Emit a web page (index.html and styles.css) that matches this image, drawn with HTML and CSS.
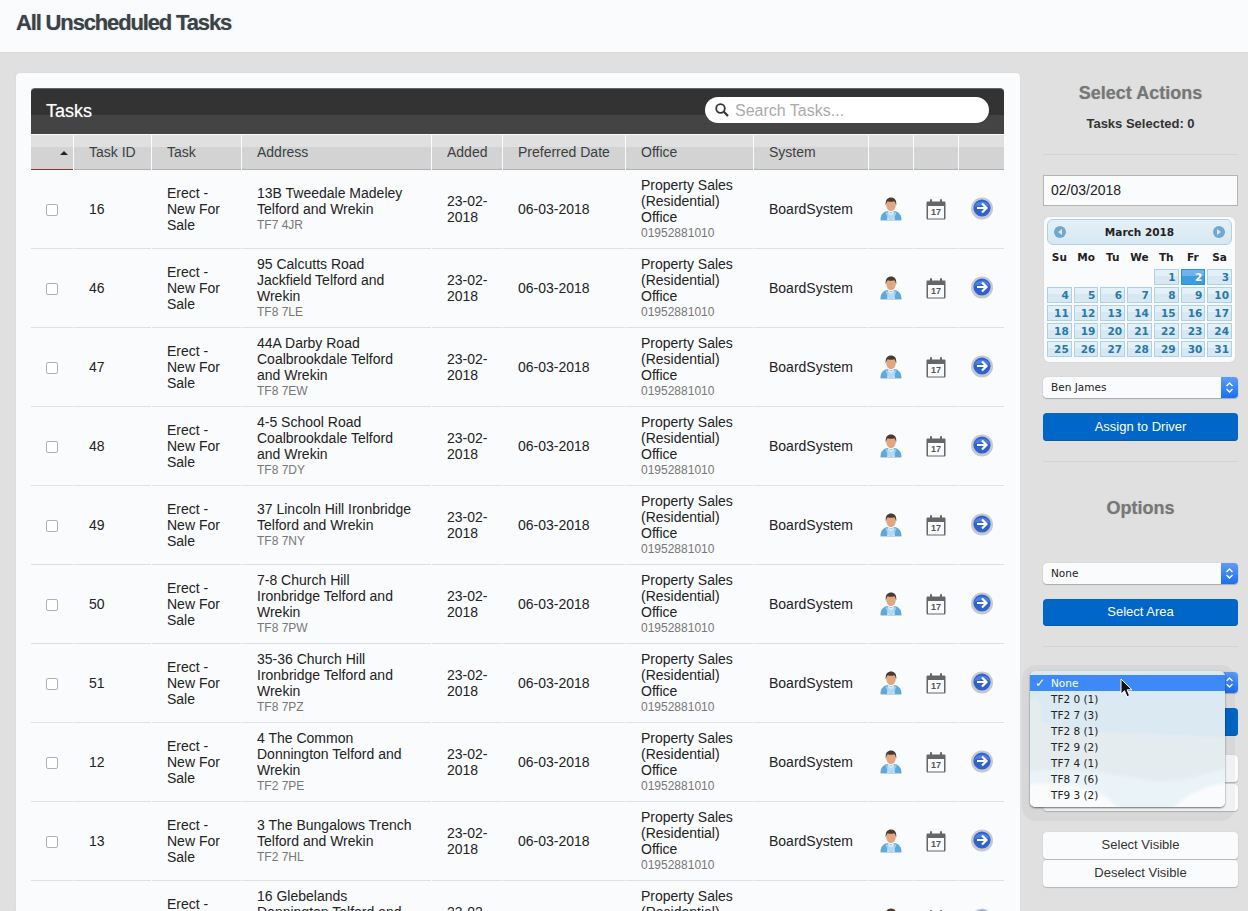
FILE: index.html
```html
<!DOCTYPE html>
<html lang="en">
<head>
<meta charset="utf-8">
<title>All Unscheduled Tasks</title>
<link rel="stylesheet" href="styles.css">
</head>
<body>
<svg class="defs" width="0" height="0" aria-hidden="true">
  <symbol id="i-person" viewBox="0 0 22 24">
    <path d="M.5 23c0-5 2-7.500 6.500-9l4 1.500 4-1.500c4.500 1.500 6.500 4 6.500 9z" fill="#5ea8dc"/>
    <path d="M8 14.500l3 1.500 3-1.500 .8 8.500H7.200z" fill="#d6ecf8"/>
    <path d="M6.500 14.500l4.500 4 4.500-4 1 1.500-3.500 7h-4L5.500 16z" fill="#a9d5f0" opacity=".8"/>
    <ellipse cx="11" cy="8" rx="4.800" ry="6.200" fill="#e0a781"/>
    <path d="M5.800 8.500C5 2.500 8 .5 11 .5s6 2 5.200 8c-.6-2.300-1.200-3.800-2-4.300-2 .8-4.400 .8-6.400 0-.8.5-1.400 2-2 4.300z" fill="#4b3a30"/>
    <rect x=".5" y="23" width="21" height="1" fill="#c9d2d8"/>
  </symbol>
  <symbol id="i-cal" viewBox="0 0 20 21">
    <path d="M1.500 2.500h17a1 1 0 0 1 1 1v16a1 1 0 0 1-1 1h-17a1 1 0 0 1-1-1v-16a1 1 0 0 1 1-1z" fill="#666"/>
    <rect x="2" y="7" width="16" height="12.500" fill="#fafbfd"/>
    <rect x="4" y="0" width="2" height="4.500" rx="1" fill="#666"/>
    <rect x="14" y="0" width="2" height="4.500" rx="1" fill="#666"/>
  </symbol>
  <symbol id="i-go" viewBox="0 0 22 23">
    <circle cx="11" cy="11.500" r="11" fill="#c5c8cf"/>
    <circle cx="11" cy="11" r="8.600" fill="#2f62cf"/>
    <path d="M3 10a8.500 8 0 0 1 16 0c-5-2-11-2-16 0z" fill="#5f8be6" opacity=".7"/>
    <path d="M6 11h9M11 6.500l4.500 4.500-4.500 4.500" fill="none" stroke="#fff" stroke-width="2.200"/>
  </symbol>
</svg>

<header class="page-header">
  <h1 class="page-title">All Unscheduled Tasks</h1>
</header>

<div class="layout">
  <main class="card">
    <div class="bar">
      <span class="bar-title">Tasks</span>
      <div class="search">
        <svg class="search-icon" width="14" height="14" viewBox="0 0 14 14" aria-hidden="true"><circle cx="5.500" cy="5.500" r="4.300" fill="none" stroke="#333" stroke-width="1.800"/><path d="M8.800 8.800L13 13" stroke="#333" stroke-width="2.200"/></svg>
        <span class="search-text">Search Tasks...</span>
      </div>
    </div>
    <div class="table-wrap">
    <table class="tasks">
      <colgroup>
        <col class="c1"><col class="c2"><col class="c3"><col class="c4"><col class="c5"><col class="c6"><col class="c7"><col class="c8"><col class="c9"><col class="c9"><col class="c11">
      </colgroup>
      <thead>
        <tr>
          <th class="sorted"><span class="sort-arrow"></span></th>
          <th>Task ID</th><th>Task</th><th>Address</th><th>Added</th><th>Preferred Date</th><th>Office</th><th>System</th><th></th><th></th><th></th>
        </tr>
      </thead>
      <tbody>
        <tr><td><span class="check"></span></td><td>16</td><td>Erect - New For Sale</td><td>13B Tweedale Madeley Telford and Wrekin<small>TF7 4JR</small></td><td>23-02-2018</td><td>06-03-2018</td><td>Property Sales (Residential) Office<small>01952881010</small></td><td>BoardSystem</td><td class="ic"><svg class="i-person"><use href="#i-person"/></svg></td><td class="ic"><span class="cal-ico"><svg class="i-cal"><use href="#i-cal"/></svg><span class="cal-day">17</span></span></td><td class="ic"><svg class="i-go"><use href="#i-go"/></svg></td></tr>
        <tr><td><span class="check"></span></td><td>46</td><td>Erect - New For Sale</td><td>95 Calcutts Road Jackfield Telford and Wrekin<small>TF8 7LE</small></td><td>23-02-2018</td><td>06-03-2018</td><td>Property Sales (Residential) Office<small>01952881010</small></td><td>BoardSystem</td><td class="ic"><svg class="i-person"><use href="#i-person"/></svg></td><td class="ic"><span class="cal-ico"><svg class="i-cal"><use href="#i-cal"/></svg><span class="cal-day">17</span></span></td><td class="ic"><svg class="i-go"><use href="#i-go"/></svg></td></tr>
        <tr><td><span class="check"></span></td><td>47</td><td>Erect - New For Sale</td><td>44A Darby Road Coalbrookdale Telford and Wrekin<small>TF8 7EW</small></td><td>23-02-2018</td><td>06-03-2018</td><td>Property Sales (Residential) Office<small>01952881010</small></td><td>BoardSystem</td><td class="ic"><svg class="i-person"><use href="#i-person"/></svg></td><td class="ic"><span class="cal-ico"><svg class="i-cal"><use href="#i-cal"/></svg><span class="cal-day">17</span></span></td><td class="ic"><svg class="i-go"><use href="#i-go"/></svg></td></tr>
        <tr><td><span class="check"></span></td><td>48</td><td>Erect - New For Sale</td><td>4-5 School Road Coalbrookdale Telford and Wrekin<small>TF8 7DY</small></td><td>23-02-2018</td><td>06-03-2018</td><td>Property Sales (Residential) Office<small>01952881010</small></td><td>BoardSystem</td><td class="ic"><svg class="i-person"><use href="#i-person"/></svg></td><td class="ic"><span class="cal-ico"><svg class="i-cal"><use href="#i-cal"/></svg><span class="cal-day">17</span></span></td><td class="ic"><svg class="i-go"><use href="#i-go"/></svg></td></tr>
        <tr><td><span class="check"></span></td><td>49</td><td>Erect - New For Sale</td><td>37 Lincoln Hill Ironbridge Telford and Wrekin<small>TF8 7NY</small></td><td>23-02-2018</td><td>06-03-2018</td><td>Property Sales (Residential) Office<small>01952881010</small></td><td>BoardSystem</td><td class="ic"><svg class="i-person"><use href="#i-person"/></svg></td><td class="ic"><span class="cal-ico"><svg class="i-cal"><use href="#i-cal"/></svg><span class="cal-day">17</span></span></td><td class="ic"><svg class="i-go"><use href="#i-go"/></svg></td></tr>
        <tr><td><span class="check"></span></td><td>50</td><td>Erect - New For Sale</td><td>7-8 Church Hill Ironbridge Telford and Wrekin<small>TF8 7PW</small></td><td>23-02-2018</td><td>06-03-2018</td><td>Property Sales (Residential) Office<small>01952881010</small></td><td>BoardSystem</td><td class="ic"><svg class="i-person"><use href="#i-person"/></svg></td><td class="ic"><span class="cal-ico"><svg class="i-cal"><use href="#i-cal"/></svg><span class="cal-day">17</span></span></td><td class="ic"><svg class="i-go"><use href="#i-go"/></svg></td></tr>
        <tr><td><span class="check"></span></td><td>51</td><td>Erect - New For Sale</td><td>35-36 Church Hill Ironbridge Telford and Wrekin<small>TF8 7PZ</small></td><td>23-02-2018</td><td>06-03-2018</td><td>Property Sales (Residential) Office<small>01952881010</small></td><td>BoardSystem</td><td class="ic"><svg class="i-person"><use href="#i-person"/></svg></td><td class="ic"><span class="cal-ico"><svg class="i-cal"><use href="#i-cal"/></svg><span class="cal-day">17</span></span></td><td class="ic"><svg class="i-go"><use href="#i-go"/></svg></td></tr>
        <tr><td><span class="check"></span></td><td>12</td><td>Erect - New For Sale</td><td>4 The Common Donnington Telford and Wrekin<small>TF2 7PE</small></td><td>23-02-2018</td><td>06-03-2018</td><td>Property Sales (Residential) Office<small>01952881010</small></td><td>BoardSystem</td><td class="ic"><svg class="i-person"><use href="#i-person"/></svg></td><td class="ic"><span class="cal-ico"><svg class="i-cal"><use href="#i-cal"/></svg><span class="cal-day">17</span></span></td><td class="ic"><svg class="i-go"><use href="#i-go"/></svg></td></tr>
        <tr><td><span class="check"></span></td><td>13</td><td>Erect - New For Sale</td><td>3 The Bungalows Trench Telford and Wrekin<small>TF2 7HL</small></td><td>23-02-2018</td><td>06-03-2018</td><td>Property Sales (Residential) Office<small>01952881010</small></td><td>BoardSystem</td><td class="ic"><svg class="i-person"><use href="#i-person"/></svg></td><td class="ic"><span class="cal-ico"><svg class="i-cal"><use href="#i-cal"/></svg><span class="cal-day">17</span></span></td><td class="ic"><svg class="i-go"><use href="#i-go"/></svg></td></tr>
        <tr><td><span class="check"></span></td><td></td><td>Erect - New For Sale</td><td>16 Glebelands Donnington Telford and Wrekin<small>&nbsp;</small></td><td>23-02-2018</td><td>06-03-2018</td><td>Property Sales (Residential) Office<small>&nbsp;</small></td><td>BoardSystem</td><td class="ic"><svg class="i-person"><use href="#i-person"/></svg></td><td class="ic"><span class="cal-ico"><svg class="i-cal"><use href="#i-cal"/></svg></span></td><td class="ic"><svg class="i-go"><use href="#i-go"/></svg></td></tr>
      </tbody>
    </table>
    </div>
  </main>

  <aside class="side">
    <h2 class="side-title first">Select Actions</h2>
    <p class="selected-count">Tasks Selected: 0</p>
    <hr class="rule rule-a">

    <div class="date-input">02/03/2018</div>

    <div class="cal">
      <div class="cal-head">
        <span class="cal-nav"><span class="tri tri-l"></span></span>
        <span class="cal-month">March 2018</span>
        <span class="cal-nav"><span class="tri tri-r"></span></span>
      </div>
      <div class="cal-dow"><span>Su</span><span>Mo</span><span>Tu</span><span>We</span><span>Th</span><span>Fr</span><span>Sa</span></div>
      <div class="cal-grid">
        <span class="blank"></span><span class="blank"></span><span class="blank"></span><span class="blank"></span>
        <span>1</span><span class="on">2</span><span>3</span>
        <span>4</span><span>5</span><span>6</span><span>7</span><span>8</span><span>9</span><span>10</span>
        <span>11</span><span>12</span><span>13</span><span>14</span><span>15</span><span>16</span><span>17</span>
        <span>18</span><span>19</span><span>20</span><span>21</span><span>22</span><span>23</span><span>24</span>
        <span>25</span><span>26</span><span>27</span><span>28</span><span>29</span><span>30</span><span>31</span>
      </div>
    </div>

    <div class="select sel-driver"><span class="sel-text">Ben James</span><span class="sel-btn"><svg width="9" height="15" viewBox="0 0 9 15"><path d="M1.500 6l3-3 3 3M1.500 9l3 3 3-3" fill="none" stroke="#fff" stroke-width="1.400"/></svg></span></div>
    <div class="btn-blue btn-assign">Assign to Driver</div>
    <hr class="rule rule-b">

    <h2 class="side-title options">Options</h2>
    <div class="select sel-area"><span class="sel-text">None</span><span class="sel-btn"><svg width="9" height="15" viewBox="0 0 9 15"><path d="M1.500 6l3-3 3 3M1.500 9l3 3 3-3" fill="none" stroke="#fff" stroke-width="1.400"/></svg></span></div>
    <div class="btn-blue btn-area">Select Area</div>
    <hr class="rule rule-c">

    <div class="select sel-post"><span class="sel-text"></span><span class="sel-btn"><svg width="9" height="15" viewBox="0 0 9 15"><path d="M1.500 6l3-3 3 3M1.500 9l3 3 3-3" fill="none" stroke="#fff" stroke-width="1.400"/></svg></span></div>
    <div class="btn-blue btn-post"></div>
    <div class="btn-white btn-under"></div>
    <div class="btn-white"></div>
    <div class="btn-white btn-vis">Select Visible</div>
    <div class="btn-white btn-desel">Deselect Visible</div>
  </aside>
</div>

<div class="menu-halo"></div>
<div class="menu">
  <svg class="menu-bg" width="195" height="136" viewBox="0 0 195 136" preserveAspectRatio="none" aria-hidden="true">
    <rect width="195" height="136" fill="#dbe9f2"/>
    <path d="M0 30C8 34 14 20 14 50 40 66 90 60 195 67V136H0z" fill="#e5ecf0"/>
    <path d="M0 100C30 94 70 100 110 106 150 114 170 100 195 96V136H0z" fill="#e9f3f8"/>
    <path d="M0 112C30 108 60 112 78 124 84 132 90 134 92 136H0z" fill="#fafbfd"/>
    <path d="M140 136C150 124 170 112 195 110V136z" fill="#fafbfd"/>
  </svg>
  <ul class="menu-list">
    <li class="menu-on"><span class="tick">✓</span>None</li>
    <li>TF2 0 (1)</li>
    <li>TF2 7 (3)</li>
    <li>TF2 8 (1)</li>
    <li>TF2 9 (2)</li>
    <li>TF7 4 (1)</li>
    <li>TF8 7 (6)</li>
    <li>TF9 3 (2)</li>
  </ul>
</div>
<svg class="cursor" width="13" height="20" viewBox="0 0 13 20" aria-hidden="true"><path d="M1 1v15l3.500-3.300 2.500 6 2.600-1.100-2.500-5.800H12z" fill="#111" stroke="#fff" stroke-width="1"/></svg>
</body>
</html>
```
FILE: styles.css
```css
* { box-sizing: border-box; }
html, body { margin: 0; height: 911px; overflow: hidden; }
body {
  position: relative;
  background: #e0e0e0;
  font-family: "Liberation Sans", Arial, sans-serif;
  font-size: 14px;
  line-height: 16px;
  color: #222;
}
.defs { position: absolute; }

.page-header {
  height: 53px;
  background: #fafbfd;
  border-bottom: 1px solid #d6d6d6;
  padding: 11px 16px 0;
}
.page-title {
  margin: 0;
  font-size: 22px;
  line-height: 24px;
  font-weight: bold;
  letter-spacing: -1.15px;
  color: #3c4348;
  text-shadow: 0 0 1px rgba(60, 67, 72, .5);
}

.layout { display: flex; padding: 20px 0 0 16px; }
.card {
  flex: none;
  width: 1004px;
  height: 838px;
  padding: 15px 16px 0 15px;
  overflow: hidden;
  background: #fafbfd;
  border-radius: 4px 4px 0 0;
  box-shadow: 0 0 1px rgba(0, 0, 0, .12);
}

.bar {
  height: 46px;
  margin-bottom: 1px;
  display: flex;
  align-items: flex-start;
  justify-content: space-between;
  padding: 8px 15px 0;
  border-radius: 4px 4px 0 0;
  border-top: 1px solid #666;
  background: linear-gradient(#333 0, #333 26px, #444 26px, #444 100%);
}
.bar-title {
  padding-top: 5px;
  font-size: 18px;
  line-height: 18px;
  color: #fff;
  text-shadow: 0 0 1px rgba(255, 255, 255, .5);
}
.search {
  width: 284px;
  height: 26px;
  display: flex;
  align-items: center;
  gap: 6px;
  padding-left: 10px;
  background: #fff;
  border-radius: 13px;
}
.search-icon { flex: none; }
.search-text { padding-top: 1px; font-size: 16px; color: #aaa; }

.table-wrap { margin: 0 -1px; }
.tasks {
  width: 975px;
  table-layout: fixed;
  border-collapse: separate;
  border-spacing: 1px 0;
}
.c1 { width: 42px; }
.c2 { width: 77px; }
.c3 { width: 89px; }
.c4 { width: 189px; }
.c5 { width: 70px; }
.c6 { width: 122px; }
.c7 { width: 127px; }
.c8 { width: 114px; }
.c9 { width: 44px; }
.c11 { width: 45px; }

.tasks th {
  height: 35px;
  padding: 0 15px;
  text-align: left;
  font-weight: normal;
  color: #3a3f44;
  background: linear-gradient(#e0e0e0 0, #e0e0e0 12px, #d3d3d3 12px, #d3d3d3 100%);
  border-bottom: 1px solid #b0b0b0;
  white-space: nowrap;
}
.tasks th.sorted { border-bottom-color: #8a3a28; text-align: right; padding-right: 5px; }
.sort-arrow {
  display: inline-block;
  border: 4px solid transparent;
  border-top: 0;
  border-bottom: 4px solid #222;
  vertical-align: middle;
}
.tasks tbody tr { height: 79px; }
.tasks td {
  padding: 0 15px;
  border-bottom: 1px solid #dfe0e3;
  vertical-align: middle;
}
.tasks td:nth-child(5), .tasks td:nth-child(8) { padding-right: 0; }
.tasks td.ic { padding: 0; }
.tasks td small { display: block; font-size: 12px; color: #777; }
.check {
  display: block;
  width: 12px;
  height: 12px;
  margin-top: 2px;
  background: #fff;
  border: 1px solid #b0b0b0;
  border-radius: 2px;
}
.i-person { width: 22px; height: 24px; display: block; margin-left: 11px; }
.i-cal { width: 20px; height: 21px; display: block; }
.cal-ico { position: relative; display: block; width: 20px; height: 21px; margin-left: 12px; }
.cal-day {
  position: absolute;
  left: 0;
  right: 0;
  top: 8px;
  text-align: center;
  font-size: 9px;
  line-height: 10px;
  font-weight: bold;
  color: #555;
}
.i-go { width: 22px; height: 23px; display: block; margin: 0 0 2px 12px; }

.side { flex: none; width: 195px; margin-left: 23px; }
.side-title {
  margin: 0;
  text-align: center;
  font-size: 18px;
  line-height: 20px;
  font-weight: bold;
  color: #777;
  text-shadow: 0 0 1px rgba(119, 119, 119, .5);
}
.side-title.first { padding-top: 10px; }
.side-title.options { margin-top: 36px; }
.selected-count {
  margin: 13px 0 0;
  text-align: center;
  font-size: 13px;
  font-weight: bold;
  color: #333;
}
.rule { border: 0; border-top: 1px solid #d4d4d4; margin: 0; }
.rule-a { margin-top: 22px; }
.rule-b { margin-top: 20px; }
.rule-c { margin-top: 20px; }

.date-input {
  height: 31px;
  margin-top: 20px;
  padding: 6px 7px;
  background: #fafbfd;
  border: 1px solid #b4b4b4;
  font-size: 14px;
}

.cal {
  width: 191px;
  height: 145px;
  margin: 11px 0 0 1px;
  padding: 2px 3px;
  background: #fafbfd;
  border-radius: 5px;
  box-shadow: 0 0 1px rgba(0, 0, 0, .2);
  font-family: "DejaVu Sans", sans-serif;
  font-size: 10.5px;
  line-height: 14px;
}
.cal-head {
  height: 26px;
  display: flex;
  align-items: center;
  justify-content: space-between;
  padding: 0 6px;
  border: 1px solid #aed0ea;
  border-radius: 6px;
  background: linear-gradient(#e4f0f7, #d7e8f2);
}
.cal-month { font-weight: bold; color: #222; }
.cal-nav {
  width: 12px;
  height: 12px;
  display: flex;
  align-items: center;
  justify-content: center;
  border-radius: 50%;
  background: #72a7d0;
}
.tri { border: 3px solid transparent; }
.tri-l { border-left: 0; border-right: 4px solid #d8e8f2; }
.tri-r { border-right: 0; border-left: 4px solid #d8e8f2; }
.cal-dow {
  display: grid;
  grid-template-columns: repeat(7, 1fr);
  gap: 2px;
  height: 24px;
  align-items: center;
  text-align: center;
  font-weight: bold;
  color: #222;
}
.cal-grid {
  display: grid;
  grid-template-columns: repeat(7, 1fr);
  grid-auto-rows: 16px;
  gap: 2px;
}
.cal-grid span {
  padding-right: 2px;
  text-align: right;
  font-weight: bold;
  line-height: 15px;
  color: #2779aa;
  border: 1px solid #aed0ea;
  background: linear-gradient(#e4f0f7 0, #e4f0f7 45%, #d7e8f2 45%, #d7e8f2 100%);
}
.cal-grid .blank { border: 0; background: none; }
.cal-grid .on {
  color: #fff;
  border-color: #2694e8;
  background: linear-gradient(#6fb3e6 0, #6fb3e6 45%, #3d9be0 45%, #3d9be0 100%);
}

.select {
  height: 21px;
  display: flex;
  background: #fafbfd;
  border-radius: 4px;
  box-shadow: 0 1px 1px #aaa, 0 0 1px #aaa;
  font-family: "DejaVu Sans", sans-serif;
  font-size: 10.5px;
  line-height: 21px;
}
.sel-text { flex: 1; padding-left: 8px; }
.sel-btn {
  flex: none;
  width: 17px;
  display: flex;
  align-items: center;
  justify-content: center;
  border-radius: 0 4px 4px 0;
  background: linear-gradient(#5d9df8, #1a6ef0);
}
.sel-driver { margin-top: 15px; }
.sel-area { margin-top: 45px; }
.sel-post { margin-top: 25px; }

.btn-blue {
  height: 28px;
  margin-top: 15px;
  text-align: center;
  line-height: 27px;
  font-size: 13px;
  color: #fff;
  background: #0066c8;
  border-radius: 4px;
  box-shadow: inset 0 -1px 0 #0a5aa8;
}
.btn-area { height: 27px; line-height: 25px; }
.btn-white {
  height: 27px;
  margin-top: 2px;
  text-align: center;
  line-height: 26px;
  font-size: 13px;
  color: #333;
  background: #fafbfd;
  border-radius: 4px;
  box-shadow: 0 1px 1px #b5b5b5, 0 0 1px #bbb;
}
.btn-under { margin-top: 19px; }
.btn-vis { margin-top: 21px; }
.btn-desel { margin-top: 1px; }

.menu-halo {
  position: absolute;
  left: 1022px;
  top: 665px;
  width: 213px;
  height: 156px;
  border-radius: 14px;
  background: rgba(0, 0, 0, .04);
}
.menu {
  position: absolute;
  left: 1030px;
  top: 671px;
  width: 195px;
  height: 136px;
  overflow: hidden;
  border-radius: 5px;
  box-shadow: 0 1px 2px rgba(0, 0, 0, .55);
}
.menu-bg { position: absolute; left: 0; top: 0; filter: blur(1.5px); transform: scale(1.04); }
.menu-list {
  position: relative;
  list-style: none;
  margin: 0;
  padding: 4px 0 0;
  font-family: "DejaVu Sans", sans-serif;
  font-size: 10.5px;
  line-height: 16px;
  color: #222;
}
.menu-list li { height: 16px; padding-left: 21px; }
.menu-list .menu-on { position: relative; background: #3d8af7; color: #fff; }
.tick { position: absolute; left: 5px; top: 0; font-size: 12px; font-weight: bold; }
.cursor { position: absolute; left: 1120px; top: 678px; }
```
